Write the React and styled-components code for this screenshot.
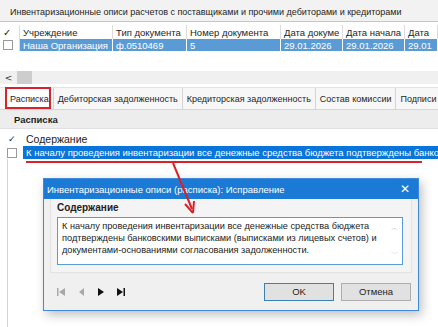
import { createGlobalStyle } from 'styled-components';
import styled from 'styled-components';

const GlobalStyle = createGlobalStyle`
  html, body {
    margin: 0;
    padding: 0;
    background: #ffffff;
    overflow: hidden;
  }
  body {
    font-family: "Liberation Sans", Arial, sans-serif;
    color: #1e1e1e;
  }
`;

const Page = styled.div`
  position: relative;
  width: 438px;
  height: 327px;
  overflow: hidden;
  background: #ffffff;
`;

const TitleBar = styled.div`
  height: 22px;
  padding: 4px 0 0 10px;
  box-sizing: border-box;
  background: #f2f2f2;
  border-bottom: 1px solid #b9c9d9;
  font-size: 9px;
  line-height: 16px;
  white-space: nowrap;
`;

const GridRow = styled.div`
  display: grid;
  grid-template-columns: 20px 93px 74px 94px 62px 62px 1fr;
  box-sizing: border-box;
  height: ${(p) => p.h}px;
  padding-top: ${(p) => p.top || 0}px;
  font-size: 9.5px;
  white-space: nowrap;
`;

const Cell = styled.div`
  display: flex;
  align-items: center;
  padding-left: 3px;
  overflow: hidden;
  background: ${(p) => (p.selected ? '#5b9bd5' : 'transparent')};
  color: ${(p) => (p.selected ? '#ffffff' : '#1e1e1e')};
  border-right: 1px solid ${(p) => (p.selected ? '#ffffff' : '#dcdcdc')};
`;

const Check = styled.span`
  display: inline-block;
  width: 8px;
  height: 8px;
  border: 1px solid #9a9a9a;
  background: #ffffff;
`;

const Blank = styled.div`
  height: ${(p) => p.h}px;
`;

const HScroll = styled.div`
  display: flex;
  align-items: center;
  height: 13px;
  background: #f0f0f0;
  color: #333;
`;

const ScrollArrow = styled.span`
  width: 17px;
  text-align: center;
  font-family: "DejaVu Sans", sans-serif;
  font-size: 9px;
`;

const Thumb = styled.span`
  width: 15px;
  height: 13px;
  background: #cdcdcd;
`;

const Tabs = styled.div`
  display: flex;
  height: 21px;
  margin-top: 3px;
  padding-left: 6px;
  border-top: 1px solid #e3e3e3;
  border-bottom: 1px solid #d6d6d6;
  background: #f7f7f7;
  overflow: hidden;
`;

const Tab = styled.div`
  display: flex;
  align-items: center;
  padding: 0 4px 0 4px;
  font-size: 9px;
  white-space: nowrap;
  background: ${(p) => (p.active ? '#ffffff' : 'transparent')};
  border-right: 1px solid #d4d4d4;
  box-sizing: border-box;
`;

const SubHeader = styled.div`
  display: flex;
  align-items: center;
  height: 18px;
  padding-left: 14px;
  background: #ededed;
  border-bottom: 1px solid #e0e0e0;
  font-size: 9.5px;
  font-weight: bold;
`;

const ListRow = styled.div`
  display: flex;
  align-items: center;
  height: ${(p) => p.h}px;
  white-space: nowrap;
  overflow: hidden;
  font-size: ${(p) => p.fs}px;
`;

const CheckCol = styled.div`
  width: 23px;
  flex: none;
  display: flex;
  justify-content: center;
  font-size: 9px;
`;

const RowText = styled.div`
  flex: 1;
  height: 100%;
  display: flex;
  align-items: center;
  padding-left: 3px;
  background: ${(p) => (p.selected ? '#0a74da' : 'transparent')};
  color: ${(p) => (p.selected ? '#ffffff' : '#1e1e1e')};
`;

const LowerArea = styled.div`
  height: 170px;
  margin-left: 7px;
  border-left: 1px solid #d4d4d4;
`;

const Annotations = styled.svg`
  position: absolute;
  left: 0;
  top: 0;
  z-index: 2;
  pointer-events: none;
`;

const Dialog = styled.div`
  position: absolute;
  z-index: 1;
  left: 43px;
  top: 178px;
  width: 376px;
  height: 133px;
  box-sizing: border-box;
  border: 1px solid #3f8ad8;
  background: #f0f0f0;
  box-shadow: 3px 4px 10px rgba(0, 0, 0, 0.25);
  display: flex;
  flex-direction: column;
`;

const DialogTitle = styled.div`
  display: flex;
  align-items: center;
  justify-content: space-between;
  height: 20px;
  flex: none;
  padding: 0 8px 0 3px;
  background: #1a7ad5;
  color: #ffffff;
  font-size: 9.5px;
`;

const CloseMark = styled.span`
  font-family: "DejaVu Sans", sans-serif;
  font-size: 12px;
  font-weight: 300;
`;

const Group = styled.div`
  margin: 0 6px;
  padding: 3px 8px 7px 6px;
  border: 1px solid #e2e2e2;
  border-top: none;
  background: #f4f4f4;
`;

const GroupLabel = styled.div`
  font-size: 10px;
  line-height: 12px;
  font-weight: bold;
  margin-bottom: 3px;
`;

const TextBox = styled.div`
  position: relative;
  height: 48px;
  box-sizing: border-box;
  border: 1px solid #5a9bd6;
  background: #ffffff;
  padding: 2px 18px 0 4px;
  font-size: 9.2px;
  line-height: 12px;
  color: #222;
`;

const MiniScroll = styled.div`
  position: absolute;
  right: 1px;
  top: 1px;
  bottom: 1px;
  width: 13px;
  display: flex;
  flex-direction: column;
  justify-content: space-between;
  align-items: center;
  color: #b5b5b5;
  font-size: 7px;
  padding: 3px 0;
  box-sizing: border-box;
`;

const Footer = styled.div`
  flex: 1;
  display: flex;
  align-items: center;
  justify-content: space-between;
  padding: 0 7px 0 12px;
`;

const NavGroup = styled.div`
  display: flex;
  gap: 10px;
  align-items: center;
`;

const Buttons = styled.div`
  display: flex;
  gap: 7px;
`;

const Button = styled.div`
  width: 70px;
  height: 18px;
  box-sizing: border-box;
  display: flex;
  align-items: center;
  justify-content: center;
  background: #e1e1e1;
  border: 1px solid ${(p) => (p.primary ? '#3c7fb1' : '#adadad')};
  font-size: 9.5px;
`;

const NavIcon = ({ kind, color }) => {
  const paths = {
    first: 'M1 1h1.5v8H1z M9 1v8L3 5z',
    prev: 'M8 1v8L3 5z',
    next: 'M2 1v8l6-4z',
    last: 'M1 1v8l6-4z M7.5 1H9v8H7.5z',
  };
  return (
    <svg width="10" height="10" viewBox="0 0 10 10">
      <path d={paths[kind]} fill={color} />
    </svg>
  );
};

const columns = ['Учреждение', 'Тип документа', 'Номер документа', 'Дата докуме', 'Дата начала', 'Дата'];
const values = ['Наша Организация', 'ф.0510469', '5', '29.01.2026', '29.01.2026', '29.01'];

export default function App() {
  return (
    <Page>
      <GlobalStyle />
      <TitleBar>Инвентаризационные описи расчетов с поставщиками и прочими дебиторами и кредиторами</TitleBar>
      <GridRow h={17} top={3}>
        <Cell>✓</Cell>
        {columns.map((c) => (
          <Cell key={c}>{c}</Cell>
        ))}
      </GridRow>
      <GridRow h={12}>
        <Cell>
          <Check />
        </Cell>
        {values.map((v, i) => (
          <Cell key={i} selected>
            {v}
          </Cell>
        ))}
      </GridRow>
      <Blank h={20} />
      <HScroll>
        <ScrollArrow>&lt;</ScrollArrow>
        <Thumb />
      </HScroll>
      <Tabs>
        <Tab active>Расписка</Tab>
        <Tab>Дебиторская задолженность</Tab>
        <Tab>Кредиторская задолженность</Tab>
        <Tab>Состав комиссии</Tab>
        <Tab>Подписи</Tab>
      </Tabs>
      <SubHeader>Расписка</SubHeader>
      <Blank h={2} />
      <ListRow h={15} fs={10.5}>
        <CheckCol>✓</CheckCol>
        <RowText>Содержание</RowText>
      </ListRow>
      <ListRow h={13} fs={9.5}>
        <CheckCol>
          <Check />
        </CheckCol>
        <RowText selected>
          К началу проведения инвентаризации все денежные средства бюджета подтверждены банковскими выписками
        </RowText>
      </ListRow>
      <LowerArea />

      <Dialog>
        <DialogTitle>
          <span>Инвентаризационные описи (расписка): Исправление</span>
          <CloseMark>✕</CloseMark>
        </DialogTitle>
        <Group>
          <GroupLabel>Содержание</GroupLabel>
          <TextBox>
            К началу проведения инвентаризации все денежные средства бюджета подтверждены банковскими
            выписками (выписками из лицевых счетов) и документами-основаниями согласования задолженности.
            <MiniScroll>
              <span>︿</span>
              <span>﹀</span>
            </MiniScroll>
          </TextBox>
        </Group>
        <Footer>
          <NavGroup>
            <NavIcon kind="first" color="#a8a8a8" />
            <NavIcon kind="prev" color="#a8a8a8" />
            <NavIcon kind="next" color="#111" />
            <NavIcon kind="last" color="#111" />
          </NavGroup>
          <Buttons>
            <Button primary>OK</Button>
            <Button>Отмена</Button>
          </Buttons>
        </Footer>
      </Dialog>

      <Annotations width="438" height="327" viewBox="0 0 438 327">
        <rect x="6" y="88" width="44" height="20" fill="none" stroke="#d9232a" strokeWidth="2" />
        <line x1="26" y1="162" x2="422" y2="162" stroke="#d9232a" strokeWidth="2" />
        <line x1="173" y1="163" x2="192" y2="209" stroke="#d9232a" strokeWidth="2" />
        <path d="M193 213 L185 204 M193 213 L194 201" stroke="#d9232a" strokeWidth="2" fill="none" />
      </Annotations>
    </Page>
  );
}
